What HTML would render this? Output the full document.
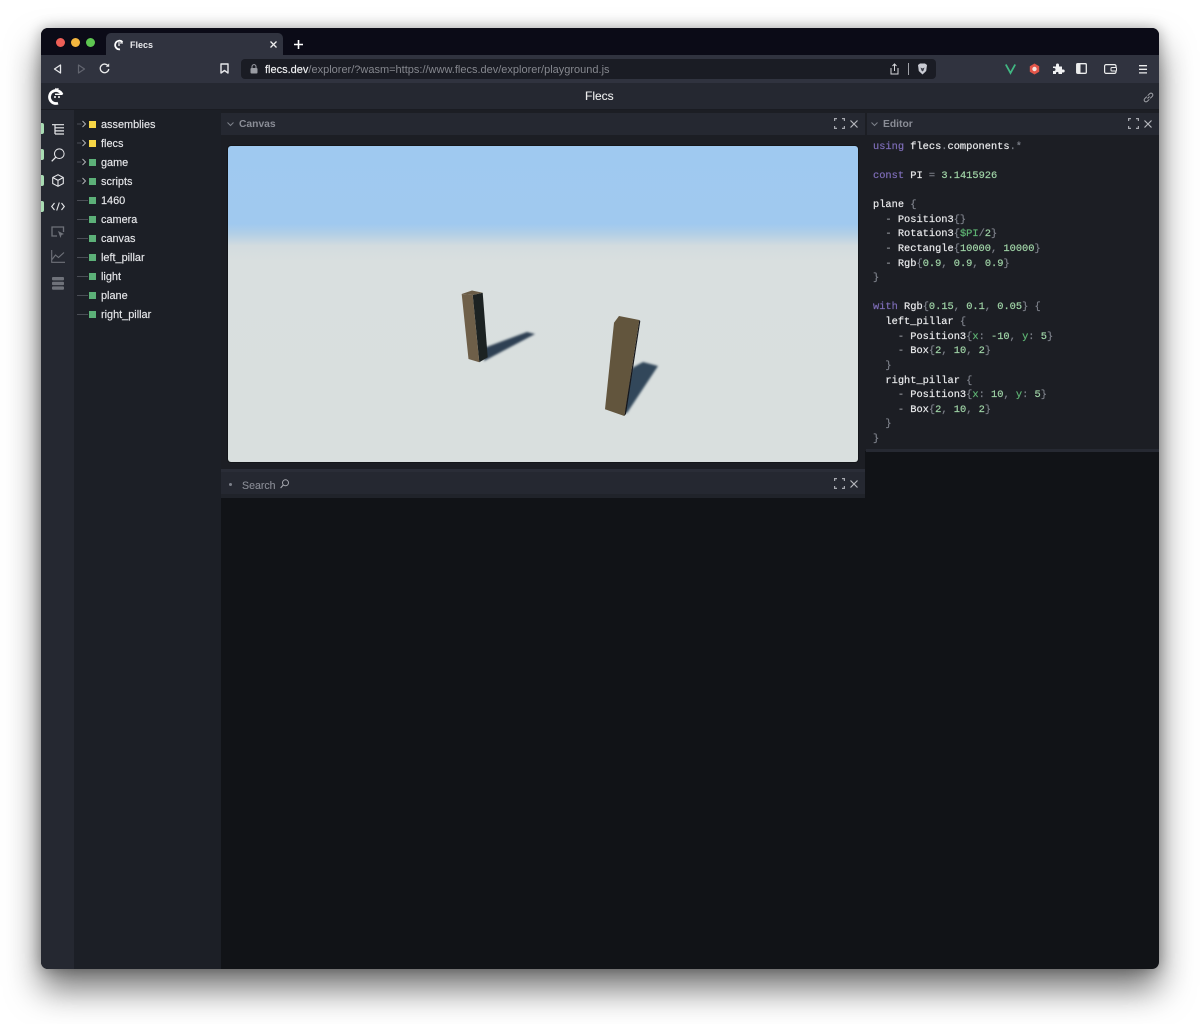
<!DOCTYPE html>
<html><head><meta charset="utf-8"><title>Flecs</title>
<style>
html,body{margin:0;padding:0;background:#fff;width:1200px;height:1024px;overflow:hidden}
*{box-sizing:border-box}
body{font-family:"Liberation Sans",sans-serif;position:relative}
.a{position:absolute}
#win{position:absolute;left:41px;top:28px;width:1118px;height:941px;border-radius:7px;background:#111317;box-shadow:0 20px 34px rgba(0,0,0,.55),0 0 14px rgba(0,0,0,.3);overflow:hidden}
.t{position:absolute;white-space:nowrap;line-height:14px}
.tree{font-size:10.9px;color:#e6e7ea;left:101px;-webkit-text-stroke:.15px #e6e7ea}
.sq{position:absolute;left:89px;width:7px;height:7px}
.ln{position:absolute;left:77px;width:11px;height:1px;background:#4a4d55}
.ar{position:absolute;left:77px;width:11px;height:9px}
.code{position:absolute;left:873px;top:139.5px;margin:0;font:10.35px/14.63px "Liberation Mono",monospace;color:#e9eaec;white-space:pre;-webkit-text-stroke:.2px}
.k{color:#7e6db8}.n{color:#9fd3a6}.p{color:#7d818a}.g{color:#5fb574}.m{color:#9a9da3}
.hd{font-size:10.3px;font-weight:bold;color:#8a8d96}
svg{position:absolute;overflow:visible}
</style></head><body>
<div id="win"></div>
<div class="a" style="left:41px;top:28px;width:1118px;height:27px;background:#0b0b17;border-radius:7px 7px 0 0"></div>
<div class="a" style="left:106px;top:33px;width:177px;height:22px;background:#30333f;border-radius:5px 5px 0 0"></div>
<div class="a" style="left:41px;top:55px;width:1118px;height:28px;background:#30333f"></div>
<div class="a" style="left:41px;top:83px;width:1118px;height:26px;background:#252831"></div>
<div class="a" style="left:41px;top:109px;width:1118px;height:1px;background:#1a1c22"></div>
<div class="a" style="left:41px;top:110px;width:33px;height:859px;background:#252831;border-radius:0 0 0 7px"></div>
<div class="a" style="left:74px;top:110px;width:147px;height:859px;background:#1c1f26"></div>
<div class="a" style="left:221px;top:110px;width:644px;height:359px;background:#1c1e24"></div>
<div class="a" style="left:221px;top:113px;width:644px;height:22px;background:#252831"></div>
<div class="a" style="left:865px;top:110px;width:294px;height:341px;background:#1c1e24"></div>
<div class="a" style="left:867px;top:113px;width:292px;height:22px;background:#252831"></div>
<div class="a" style="left:866px;top:449px;width:293px;height:3px;background:#262932"></div>
<div class="a" style="left:221px;top:469px;width:644px;height:3px;background:#2a2d37"></div>
<div class="a" style="left:221px;top:472px;width:644px;height:22px;background:#252831"></div>
<div class="a" style="left:221px;top:494px;width:644px;height:4px;background:#20232a"></div>

<!-- traffic lights -->
<div class="a" style="left:56px;top:38px;width:9px;height:9px;border-radius:50%;background:#ee5f57"></div>
<div class="a" style="left:71px;top:38px;width:9px;height:9px;border-radius:50%;background:#f4b63f"></div>
<div class="a" style="left:86px;top:38px;width:9px;height:9px;border-radius:50%;background:#5ec651"></div>

<!-- tab -->
<svg style="left:113px;top:38px" width="12" height="13" viewBox="0 0 12 13"><path d="M9.500 4A4.300 4.300 0 1 0 7 11.300" fill="none" stroke="#fff" stroke-width="1.800"/><circle cx="6" cy="7" r=".9" fill="#fff"/><path d="M5 5h5" stroke="#fff" stroke-width="1"/></svg>
<div class="t" style="left:130px;top:38px;font-size:9px;font-weight:bold;color:#e8e9ec">Flecs</div>
<svg style="left:270px;top:41px" width="7" height="7"><path d="M.5.500l6 6M6.500.500l-6 6" stroke="#eee" stroke-width="1.300"/></svg>
<svg style="left:294px;top:40px" width="9" height="9"><path d="M4.500 0v9M0 4.500h9" stroke="#fff" stroke-width="1.600"/></svg>

<!-- toolbar -->
<svg style="left:53px;top:64px" width="9" height="10"><path d="M7.500 1L1.500 5l6 4z" fill="none" stroke="#e6e7ea" stroke-width="1.300" stroke-linejoin="round"/></svg>
<svg style="left:77px;top:64px" width="9" height="10"><path d="M1.500 1l6 4-6 4z" fill="none" stroke="#62656f" stroke-width="1.200" stroke-linejoin="round"/></svg>
<svg style="left:99px;top:63px" width="11" height="11" viewBox="0 0 11 11"><path d="M9.300 3.300A4.300 4.300 0 1 0 9.800 6" fill="none" stroke="#eceded" stroke-width="1.300"/><path d="M6.800 3.700h3.400V.4z" fill="#eceded"/></svg>
<svg style="left:220px;top:63px" width="9" height="11"><path d="M1 1h7v9L4.500 7.500 1 10z" fill="none" stroke="#e6e7ea" stroke-width="1.400" stroke-linejoin="round"/></svg>
<div class="a" style="left:241px;top:59px;width:695px;height:20px;background:#1a1c24;border-radius:4px"></div>
<svg style="left:250px;top:64px" width="8" height="10"><rect x="0.500" y="4" width="7" height="5.500" rx="1" fill="#9a9ca3"/><path d="M2 4V2.600a2 2 0 0 1 4 0V4" fill="none" stroke="#9a9ca3" stroke-width="1"/></svg>
<div class="t" style="left:265px;top:63px;font-size:11px;color:#85878e"><span style="color:#f0f1f3;-webkit-text-stroke:.15px #f0f1f3">flecs.dev</span>/explorer/?wasm=https://www.flecs.dev/explorer/playground.js</div>
<svg style="left:890px;top:63px" width="9" height="12"><path d="M1 5v6h7V5M4.500 8V1M2.500 3l2-2 2 2" fill="none" stroke="#d5d6da" stroke-width="1"/></svg>
<div class="a" style="left:908px;top:63px;width:1px;height:12px;background:#a0a2a8"></div>
<svg style="left:917px;top:63px" width="11" height="12"><path d="M1 2l2-1.500h5L10 2l-.8 6-3.700 3.500L1.800 8z" fill="#c9cbd3"/><path d="M3.500 4.500l2 1 2-1-1 3-1 1-1-1z" fill="#3a3d48"/></svg>
<svg style="left:1005px;top:64px" width="11" height="10"><path d="M.8.500L5.500 9 10.200.500" fill="none" stroke="#41b883" stroke-width="1.800"/></svg>
<svg style="left:1029px;top:63px" width="11" height="12"><path d="M5.500.5l4.700 2.700v5.600l-4.700 2.700L.8 8.800V3.200z" fill="#e2564a"/><circle cx="5.500" cy="6" r="2.200" fill="#f4e5e0"/></svg>
<svg style="left:1052px;top:63px" width="12" height="12"><path d="M1 3.500h3V2a1.500 1.500 0 0 1 3 0v1.500h3v3h1.200a1.500 1.500 0 0 1 0 3H10V11H6.500V9.800a1.300 1.300 0 0 0-2.500 0V11H1V8h1a1.500 1.500 0 0 0 0-3H1z" fill="#f0f1f3"/></svg>
<svg style="left:1076px;top:63px" width="11" height="11"><rect x=".7" y=".7" width="9.600" height="9.600" rx="1" fill="none" stroke="#eceded" stroke-width="1.300"/><rect x="1" y="1" width="3.500" height="9" fill="#eceded"/></svg>
<svg style="left:1104px;top:64px" width="13" height="10"><rect x=".6" y=".6" width="11.400" height="8.800" rx="1.500" fill="none" stroke="#eceded" stroke-width="1.200"/><rect x="7" y="3.500" width="5.500" height="3.500" rx="1" fill="#30333f" stroke="#eceded"/></svg>
<svg style="left:1139px;top:65px" width="8" height="9"><path d="M0 .7h8M0 4.300h8M0 7.900h8" stroke="#eceded" stroke-width="1.300"/></svg>

<!-- app header -->
<svg style="left:48px;top:87px" width="17" height="18" viewBox="0 0 17 18"><path d="M14 7.500A6.500 6.500 0 1 0 10 16.200" fill="none" stroke="#fff" stroke-width="2.800"/><path d="M7.500 3l.6-2M8.500 3l1.900-1.600" stroke="#fff" stroke-width="1.300"/><circle cx="7" cy="10" r="1" fill="#fff"/><circle cx="11" cy="10" r="1" fill="#fff"/><path d="M7 7.300h7.500" stroke="#fff" stroke-width="1.400"/></svg>
<div class="t" style="left:585px;top:89px;font-size:12px;color:#eceded;-webkit-text-stroke:.1px #eceded">Flecs</div>
<svg style="left:1143px;top:92px" width="11" height="11" viewBox="0 0 11 11"><path d="M4.500 6.500l2-2M3.800 4.600L1.700 6.700a1.800 1.800 0 0 0 2.600 2.600l2-2M7.200 6.400l2.100-2.100a1.800 1.800 0 0 0-2.600-2.600l-2 2" fill="none" stroke="#a3a5ab" stroke-width="1"/></svg>

<!-- left rail -->
<div class="a" style="left:41px;top:123px;width:3px;height:11px;background:#a9dcb3;border-radius:0 2px 2px 0"></div>
<div class="a" style="left:41px;top:149px;width:3px;height:11px;background:#a9dcb3;border-radius:0 2px 2px 0"></div>
<div class="a" style="left:41px;top:175px;width:3px;height:11px;background:#a9dcb3;border-radius:0 2px 2px 0"></div>
<div class="a" style="left:41px;top:201px;width:3px;height:11px;background:#a9dcb3;border-radius:0 2px 2px 0"></div>
<svg style="left:52px;top:124px" width="12" height="11"><path d="M0 .7h12M3 3.800h9M3 6.900h9M3 10h9M3 .7V10" fill="none" stroke="#e6e7ea" stroke-width="1.200"/></svg>
<svg style="left:51px;top:148px" width="14" height="14"><circle cx="8.300" cy="5.700" r="4.800" fill="none" stroke="#e6e7ea" stroke-width="1"/><path d="M4.800 9.200L.7 13.300" stroke="#e6e7ea" stroke-width="1.300"/></svg>
<svg style="left:52px;top:174px" width="12" height="13"><path d="M6 .7l5.300 2.800v6L6 12.300.7 9.500v-6zM.7 3.500L6 6.400l5.300-2.900M6 6.400v5.900" fill="none" stroke="#e6e7ea" stroke-width="1.100" stroke-linejoin="round"/></svg>
<svg style="left:51px;top:202px" width="14" height="9"><path d="M3.500 1L.7 4.500 3.500 8M10.500 1l2.800 3.500L10.500 8M8.300.5L5.700 8.500" fill="none" stroke="#e6e7ea" stroke-width="1.100"/></svg>
<svg style="left:51px;top:226px" width="14" height="13"><path d="M6 10H1V1h11.500v5" fill="none" stroke="#6f727a" stroke-width="1.300"/><path d="M7 5l6 3-2.500 1L9.500 12z" fill="#6f727a"/></svg>
<svg style="left:51px;top:250px" width="14" height="13"><path d="M.7 0v12.300H14" fill="none" stroke="#6f727a" stroke-width="1.100"/><path d="M1 9.500l3.500-4.500 3 2.500L13 2.500" fill="none" stroke="#6f727a" stroke-width="1.100"/></svg>
<svg style="left:52px;top:277px" width="12" height="13"><rect width="12" height="3.400" rx="1" fill="#6f727a"/><rect y="4.700" width="12" height="3.400" rx="1" fill="#6f727a"/><rect y="9.400" width="12" height="3.400" rx="1" fill="#6f727a"/></svg>

<!-- tree -->
<svg class="ar" style="top:119px"><path d="M0 5h4.500" stroke="#4a4d55"/><path d="M5.500 2l3 3-3 3" fill="none" stroke="#b0b2b6" stroke-width="1"/></svg>
<svg class="ar" style="top:138px"><path d="M0 5h4.500" stroke="#4a4d55"/><path d="M5.500 2l3 3-3 3" fill="none" stroke="#b0b2b6" stroke-width="1"/></svg>
<svg class="ar" style="top:157px"><path d="M0 5h4.500" stroke="#4a4d55"/><path d="M5.500 2l3 3-3 3" fill="none" stroke="#b0b2b6" stroke-width="1"/></svg>
<svg class="ar" style="top:176px"><path d="M0 5h4.500" stroke="#4a4d55"/><path d="M5.500 2l3 3-3 3" fill="none" stroke="#b0b2b6" stroke-width="1"/></svg>
<div class="ln" style="top:200px"></div><div class="ln" style="top:219px"></div><div class="ln" style="top:238px"></div><div class="ln" style="top:257px"></div><div class="ln" style="top:276px"></div><div class="ln" style="top:295px"></div><div class="ln" style="top:314px"></div>
<div class="sq" style="top:121px;background:#f6d646"></div>
<div class="sq" style="top:140px;background:#f6d646"></div>
<div class="sq" style="top:159px;background:#5cb078"></div>
<div class="sq" style="top:178px;background:#5cb078"></div>
<div class="sq" style="top:197px;background:#5cb078"></div>
<div class="sq" style="top:216px;background:#5cb078"></div>
<div class="sq" style="top:235px;background:#5cb078"></div>
<div class="sq" style="top:254px;background:#5cb078"></div>
<div class="sq" style="top:273px;background:#5cb078"></div>
<div class="sq" style="top:292px;background:#5cb078"></div>
<div class="sq" style="top:311px;background:#5cb078"></div>
<div class="t tree" style="top:117.500px">assemblies</div>
<div class="t tree" style="top:136.500px">flecs</div>
<div class="t tree" style="top:155.500px">game</div>
<div class="t tree" style="top:174.500px">scripts</div>
<div class="t tree" style="top:193.500px">1460</div>
<div class="t tree" style="top:212.500px">camera</div>
<div class="t tree" style="top:231.500px">canvas</div>
<div class="t tree" style="top:250.500px">left_pillar</div>
<div class="t tree" style="top:269.500px">light</div>
<div class="t tree" style="top:288.500px">plane</div>
<div class="t tree" style="top:307.500px">right_pillar</div>

<!-- panel headers -->
<svg style="left:227px;top:122px" width="7" height="4"><path d="M.5.500l3 3 3-3" fill="none" stroke="#7d818a"/></svg>
<div class="t hd" style="left:239px;top:118px">Canvas</div>
<svg style="left:871px;top:122px" width="7" height="4"><path d="M.5.500l3 3 3-3" fill="none" stroke="#7d818a"/></svg>
<div class="t hd" style="left:883px;top:118px">Editor</div>
<div class="a" style="left:229px;top:483px;width:3px;height:3px;border-radius:50%;background:#7d818a"></div>
<div class="t" style="left:242px;top:479px;font-size:10.600px;color:#8a8d96;-webkit-text-stroke:.1px #8a8d96">Search</div>
<svg style="left:280px;top:479px" width="9" height="10"><circle cx="5.500" cy="3.800" r="3" fill="none" stroke="#a5a7ae" stroke-width="1"/><path d="M3.300 6L.6 9" stroke="#a5a7ae" stroke-width="1.100"/></svg>

<svg style="left:834px;top:118px" width="11" height="11"><path d="M.6 3V.6H3M8 .6h2.400V3M10.400 8v2.400H8M3 10.400H.6V8" fill="none" stroke="#a5a7ae" stroke-width="1.200"/></svg>
<svg style="left:850px;top:120px" width="8" height="8"><path d="M.5.500l7 7M7.500.500l-7 7" stroke="#b5b7bc" stroke-width="1.200"/></svg>
<svg style="left:1128px;top:118px" width="11" height="11"><path d="M.6 3V.6H3M8 .6h2.400V3M10.400 8v2.400H8M3 10.400H.6V8" fill="none" stroke="#a5a7ae" stroke-width="1.200"/></svg>
<svg style="left:1144px;top:120px" width="8" height="8"><path d="M.5.500l7 7M7.500.500l-7 7" stroke="#b5b7bc" stroke-width="1.200"/></svg>
<svg style="left:834px;top:478px" width="11" height="11"><path d="M.6 3V.6H3M8 .6h2.400V3M10.400 8v2.400H8M3 10.400H.6V8" fill="none" stroke="#a5a7ae" stroke-width="1.200"/></svg>
<svg style="left:850px;top:480px" width="8" height="8"><path d="M.5.500l7 7M7.500.500l-7 7" stroke="#b5b7bc" stroke-width="1.200"/></svg>

<!-- canvas -->
<div class="a" style="left:228px;top:146px;width:630px;height:316px;border-radius:3px;box-shadow:0 0 0 1px #14161a;background:linear-gradient(180deg,#9fc9f0 0,#a0c9ef 78px,#b3cfe6 88px,#d3dcdf 100px,#d9dfdf 115px,#d9dfde 100%)"></div>
<svg style="left:0;top:0" width="1200" height="1024">
<defs><filter id="b" x="-20%" y="-20%" width="140%" height="140%"><feGaussianBlur stdDeviation="1.100"/></filter><filter id="s" x="-20%" y="-20%" width="140%" height="140%"><feGaussianBlur stdDeviation=".35"/></filter></defs>
<polygon filter="url(#b)" points="484,348 527,332 535,334 484,361" fill="#2f4052"/>
<polygon filter="url(#b)" points="632,368 643,362 658,366 627,413 620,412" fill="#32475a"/>
<g filter="url(#s)">
<polygon points="472.700,295 482.700,292.700 487.700,357.300 479.300,362.300" fill="#1b2122"/>
<polygon points="461.700,294 472.700,295 479.300,362.300 468.500,359" fill="#6e5f49"/>
<polygon points="461.700,294 472,290.500 482.700,292.700 472.700,295" fill="#6a5c46"/>
<polygon points="639.300,320 640.300,321 626,414 624.300,416" fill="#15191a"/>
<polygon points="614,322.700 619,316 639.300,320 624.300,416 605,409.300" fill="#62543d"/>
</g>
</svg>

<!-- code -->
<pre class="code"><span class="k">using</span> flecs<span class="p">.</span>components<span class="p">.*</span>

<span class="k">const</span> PI <span class="p">=</span> <span class="n">3.1415926</span>

plane <span class="p">{</span>
  <span class="m">-</span> Position3<span class="p">{}</span>
  <span class="m">-</span> Rotation3<span class="p">{</span><span class="g">$PI</span><span class="p">/</span><span class="n">2</span><span class="p">}</span>
  <span class="m">-</span> Rectangle<span class="p">{</span><span class="n">10000</span><span class="p">,</span> <span class="n">10000</span><span class="p">}</span>
  <span class="m">-</span> Rgb<span class="p">{</span><span class="n">0.9</span><span class="p">,</span> <span class="n">0.9</span><span class="p">,</span> <span class="n">0.9</span><span class="p">}</span>
<span class="p">}</span>

<span class="k">with</span> Rgb<span class="p">{</span><span class="n">0.15</span><span class="p">,</span> <span class="n">0.1</span><span class="p">,</span> <span class="n">0.05</span><span class="p">}</span> <span class="p">{</span>
  left_pillar <span class="p">{</span>
    <span class="m">-</span> Position3<span class="p">{</span><span class="g">x</span><span class="p">:</span> <span class="n">-10</span><span class="p">,</span> <span class="g">y</span><span class="p">:</span> <span class="n">5</span><span class="p">}</span>
    <span class="m">-</span> Box<span class="p">{</span><span class="n">2</span><span class="p">,</span> <span class="n">10</span><span class="p">,</span> <span class="n">2</span><span class="p">}</span>
  <span class="p">}</span>
  right_pillar <span class="p">{</span>
    <span class="m">-</span> Position3<span class="p">{</span><span class="g">x</span><span class="p">:</span> <span class="n">10</span><span class="p">,</span> <span class="g">y</span><span class="p">:</span> <span class="n">5</span><span class="p">}</span>
    <span class="m">-</span> Box<span class="p">{</span><span class="n">2</span><span class="p">,</span> <span class="n">10</span><span class="p">,</span> <span class="n">2</span><span class="p">}</span>
  <span class="p">}</span>
<span class="p">}</span></pre>
</body></html>
